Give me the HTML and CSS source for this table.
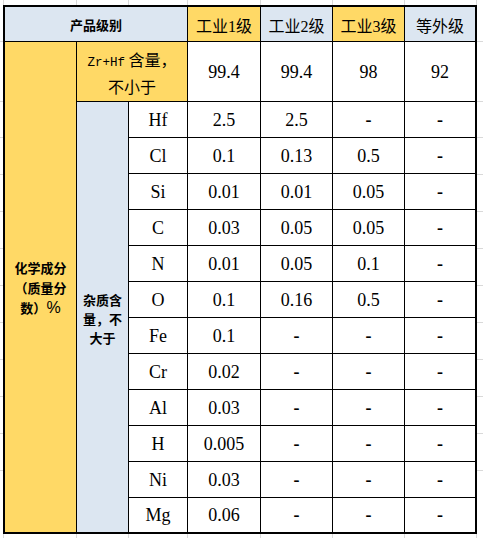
FILE: index.html
```html
<!DOCTYPE html>
<html lang="zh-CN">
<head>
<meta charset="utf-8">
<title>产品级别</title>
<link rel="stylesheet" href="styles.css">
</head>
<body>
<div class="sheet">
  <div class="cell blue label head-span">产品级别</div>
  <div class="cell yellow label tall-1"><span>化学成分<br>（质量分<br>数）<span class="pct">%</span></span></div>
  <div class="cell yellow zr"><span><span class="mono">Zr+Hf</span> 含量，<br>不小于</span></div>
  <div class="cell blue label tall-2"><span>杂质含<br>量，不<br>大于</span></div>

  <div class="cell yellow grade">工业1级</div>
  <div class="cell blue grade">工业2级</div>
  <div class="cell yellow grade">工业3级</div>
  <div class="cell blue grade">等外级</div>

  <div class="cell num">99.4</div><div class="cell num">99.4</div><div class="cell num">98</div><div class="cell num">92</div>

  <div class="cell num">Hf</div><div class="cell num">2.5</div><div class="cell num">2.5</div><div class="cell num dash">-</div><div class="cell num dash">-</div>
  <div class="cell num">Cl</div><div class="cell num">0.1</div><div class="cell num">0.13</div><div class="cell num">0.5</div><div class="cell num dash">-</div>
  <div class="cell num">Si</div><div class="cell num">0.01</div><div class="cell num">0.01</div><div class="cell num">0.05</div><div class="cell num dash">-</div>
  <div class="cell num">C</div><div class="cell num">0.03</div><div class="cell num">0.05</div><div class="cell num">0.05</div><div class="cell num dash">-</div>
  <div class="cell num">N</div><div class="cell num">0.01</div><div class="cell num">0.05</div><div class="cell num">0.1</div><div class="cell num dash">-</div>
  <div class="cell num">O</div><div class="cell num">0.1</div><div class="cell num">0.16</div><div class="cell num">0.5</div><div class="cell num dash">-</div>
  <div class="cell num">Fe</div><div class="cell num">0.1</div><div class="cell num dash">-</div><div class="cell num dash">-</div><div class="cell num dash">-</div>
  <div class="cell num">Cr</div><div class="cell num">0.02</div><div class="cell num dash">-</div><div class="cell num dash">-</div><div class="cell num dash">-</div>
  <div class="cell num">Al</div><div class="cell num">0.03</div><div class="cell num dash">-</div><div class="cell num dash">-</div><div class="cell num dash">-</div>
  <div class="cell num">H</div><div class="cell num">0.005</div><div class="cell num dash">-</div><div class="cell num dash">-</div><div class="cell num dash">-</div>
  <div class="cell num">Ni</div><div class="cell num">0.03</div><div class="cell num dash">-</div><div class="cell num dash">-</div><div class="cell num dash">-</div>
  <div class="cell num">Mg</div><div class="cell num">0.06</div><div class="cell num dash">-</div><div class="cell num dash">-</div><div class="cell num dash">-</div>
</div>
</body>
</html>
```
FILE: styles.css
```css
html {
  background-color: #fff;
  background-image:
    linear-gradient(#d9d9d9, #d9d9d9),
    linear-gradient(#d9d9d9, #d9d9d9),
    linear-gradient(#d9d9d9, #d9d9d9),
    linear-gradient(#d9d9d9, #d9d9d9),
    linear-gradient(#d9d9d9, #d9d9d9),
    linear-gradient(#d9d9d9, #d9d9d9),
    linear-gradient(#d9d9d9, #d9d9d9),
    linear-gradient(#d9d9d9, #d9d9d9),
    linear-gradient(#d9d9d9, #d9d9d9),
    linear-gradient(#d9d9d9, #d9d9d9),
    repeating-linear-gradient(to bottom, transparent 0 36px, #d9d9d9 36px 37px);
  background-size:
    1px 100%, 1px 100%, 1px 100%, 1px 100%, 1px 100%, 1px 100%, 1px 100%, 1px 100%,
    100% 1px, 100% 1px, 100% 396px;
  background-position:
    3px 0, 76px 0, 128px 0, 187px 0, 260px 0, 332px 0, 404px 0, 476px 0,
    0 41px, 0 101px, 0 101px;
  background-repeat: no-repeat;
  min-height: 100%;
}

body {
  margin: 0;
  height: 538px;
}

.sheet {
  margin: 5px 0 0 3px;
  display: grid;
  grid-template-columns: 71px 51px 58px 72px 71px 71px 70px;
  grid-template-rows: 34px 59px repeat(11, 35px) 34px;
  gap: 1px;
  width: max-content;
  background: #000;
  border: 2px solid #000;
}

.cell {
  background: #fff;
  display: flex;
  align-items: center;
  justify-content: center;
  text-align: center;
  color: #000;
  overflow: hidden;
}

.blue { background: #dce6f1; }
.yellow { background: #ffd966; }

.label {
  font-family: "Noto Sans CJK SC", sans-serif;
  font-weight: bold;
  font-size: 13px;
  line-height: 19px;
}

.head-span { grid-column: 1 / 4; grid-row: 1; }
.tall-1 { grid-column: 1; grid-row: 2 / 15; line-height: 20px; padding-top: 1px; }
.tall-2 { grid-column: 2; grid-row: 3 / 15; padding-top: 2px; }

.pct {
  font-family: "Liberation Sans", sans-serif;
  font-weight: normal;
  font-size: 16px;
}

.zr {
  grid-column: 2 / 4;
  grid-row: 2;
  font-family: "Noto Sans CJK SC", sans-serif;
  font-size: 16px;
  line-height: 23px;
  padding-top: 3px;
}

.mono {
  font-family: "Liberation Mono", monospace;
  font-size: 12.5px;
}

.grade {
  font-family: "Liberation Serif", "Noto Sans CJK SC", serif;
  font-size: 16px;
  padding-top: 2px;
}

.num {
  font-family: "Liberation Serif", serif;
  font-size: 18px;
  padding-top: 1px;
}

.dash {
  font-weight: bold;
}
```
